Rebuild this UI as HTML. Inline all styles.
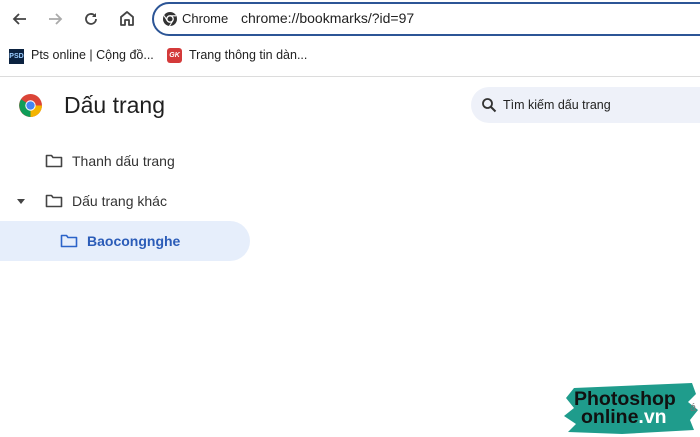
<!DOCTYPE html>
<html><head><meta charset="utf-8"><style>
*{margin:0;padding:0;box-sizing:border-box}
body{width:700px;height:437px;overflow:hidden;background:#fff;font-family:"Liberation Sans",sans-serif;position:relative;color:#1f1f1f}
.a{position:absolute}
</style></head><body>
<svg class="a" style="left:10px;top:9px" width="20" height="20" viewBox="0 0 20 20"><path d="M16 10H4M9 5L4 10l5 5" stroke="#444" stroke-width="1.8" fill="none"/></svg>
<svg class="a" style="left:45px;top:9px" width="20" height="20" viewBox="0 0 20 20"><path d="M4 10h12M11 5l5 5-5 5" stroke="#aaa" stroke-width="1.8" fill="none"/></svg>
<svg class="a" style="left:81px;top:9px" width="20" height="20" viewBox="0 0 20 20"><path d="M15 10a5 5 0 1 1-1.5-3.6" stroke="#444" stroke-width="1.8" fill="none"/><path d="M15 4v4h-4z" fill="#444"/></svg>
<svg class="a" style="left:117px;top:9px" width="20" height="20" viewBox="0 0 20 20"><path d="M4 16V8l6-5 6 5v8h-4v-5H8v5z" stroke="#444" stroke-width="1.8" fill="none" stroke-linejoin="round"/></svg>
<div class="a" style="left:152px;top:2px;width:580px;height:34px;border:2px solid #2c5596;border-radius:17px"></div>
<svg class="a" style="left:162px;top:11px" width="16" height="16" viewBox="0 0 16 16"><circle cx="8" cy="8" r="7" fill="#333"/><circle cx="8" cy="8" r="3.2" fill="#333" stroke="#fff" stroke-width="1.3"/><path d="M8 4.8h6M5.2 9.6L2 4.5M10.8 9.6L7.5 15" stroke="#fff" stroke-width="1.1"/></svg>
<div class="a" style="left:182px;top:11px;font-size:13px;color:#222">Chrome</div>
<div class="a" style="left:241px;top:10px;font-size:14px;color:#222">chrome://bookmarks/?id=97</div>
<div class="a" style="left:9px;top:49px;width:15px;height:15px;background:#0b2240;color:#9cf;font-size:7px;font-weight:bold;line-height:15px;text-align:center">PSD</div>
<div class="a" style="left:31px;top:48px;font-size:12.5px;color:#222">Pts online | Cộng đồ...</div>
<div class="a" style="left:167px;top:48px;width:15px;height:15px;background:#d43a3a;border-radius:3px;color:#fff;font-size:7px;font-style:italic;font-weight:bold;line-height:15px;text-align:center">GK</div>
<div class="a" style="left:189px;top:48px;font-size:12.5px;color:#222">Trang thông tin dàn...</div>
<div class="a" style="left:0;top:76px;width:700px;height:1px;background:#dcdcdc"></div>
<svg class="a" style="left:18px;top:93px" width="25" height="25" viewBox="0 0 24 24"><circle cx="12" cy="12" r="11" fill="#db4437"/><path d="M12 12h11A11 11 0 0 1 12 23z" fill="#f4b400"/><path d="M12 12L3 6A11 11 0 0 0 12 23z" fill="#0f9d58"/><circle cx="12" cy="12" r="5" fill="#fff"/><circle cx="12" cy="12" r="4" fill="#4285f4"/></svg>
<div class="a" style="left:64px;top:92px;font-size:23px;color:#1f1f1f">Dấu trang</div>
<div class="a" style="left:471px;top:87px;width:260px;height:36px;background:#eef1f9;border-radius:18px"></div>
<svg class="a" style="left:481px;top:97px" width="16" height="16" viewBox="0 0 16 16"><circle cx="6.5" cy="6.5" r="4.5" stroke="#333" stroke-width="1.8" fill="none"/><path d="M10 10l4.5 4.5" stroke="#333" stroke-width="2"/></svg>
<div class="a" style="left:503px;top:98px;font-size:12.5px;color:#222">Tìm kiếm dấu trang</div>
<svg class="a" style="left:45px;top:153px" width="18" height="16" viewBox="0 0 18 16"><path d="M1.5 2.5h5l1.5 2h8.5v9h-15z" stroke="#444" stroke-width="1.6" fill="none" stroke-linejoin="round"/></svg>
<div class="a" style="left:72px;top:153px;font-size:14px;color:#333">Thanh dấu trang</div>
<div class="a" style="left:17px;top:199px;width:0;height:0;border-left:4px solid transparent;border-right:4px solid transparent;border-top:5px solid #444"></div>
<svg class="a" style="left:45px;top:193px" width="18" height="16" viewBox="0 0 18 16"><path d="M1.5 2.5h5l1.5 2h8.5v9h-15z" stroke="#444" stroke-width="1.6" fill="none" stroke-linejoin="round"/></svg>
<div class="a" style="left:72px;top:193px;font-size:14px;color:#333">Dấu trang khác</div>
<div class="a" style="left:-20px;top:221px;width:270px;height:40px;background:#e6eefb;border-radius:0 20px 20px 0"></div>
<svg class="a" style="left:60px;top:233px" width="18" height="16" viewBox="0 0 18 16"><path d="M1.5 2.5h5l1.5 2h8.5v9h-15z" stroke="#2b63c9" stroke-width="1.6" fill="none" stroke-linejoin="round"/></svg>
<div class="a" style="left:87px;top:233px;font-size:14px;color:#2b5cb8;font-weight:bold">Baocongnghe</div>
<svg class="a" style="left:562px;top:380px" width="138" height="57" viewBox="0 0 138 57"><path d="M12 8 L130 3 L134 14 L126 22 L136 30 L128 40 L132 50 L60 54 L6 52 L14 44 L2 36 L12 28 L4 18z" fill="#1f9c8c"/></svg>
<div class="a" style="left:574px;top:390px;font-size:19.5px;font-weight:bold;color:#111;line-height:18px">Photoshop</div>
<div class="a" style="left:581px;top:408px;font-size:19.5px;font-weight:bold;color:#111;line-height:18px">online<span style="color:#fff">.vn</span></div>
<div class="a" style="left:690px;top:402px;font-size:11px;color:#777">á</div>
</body></html>
